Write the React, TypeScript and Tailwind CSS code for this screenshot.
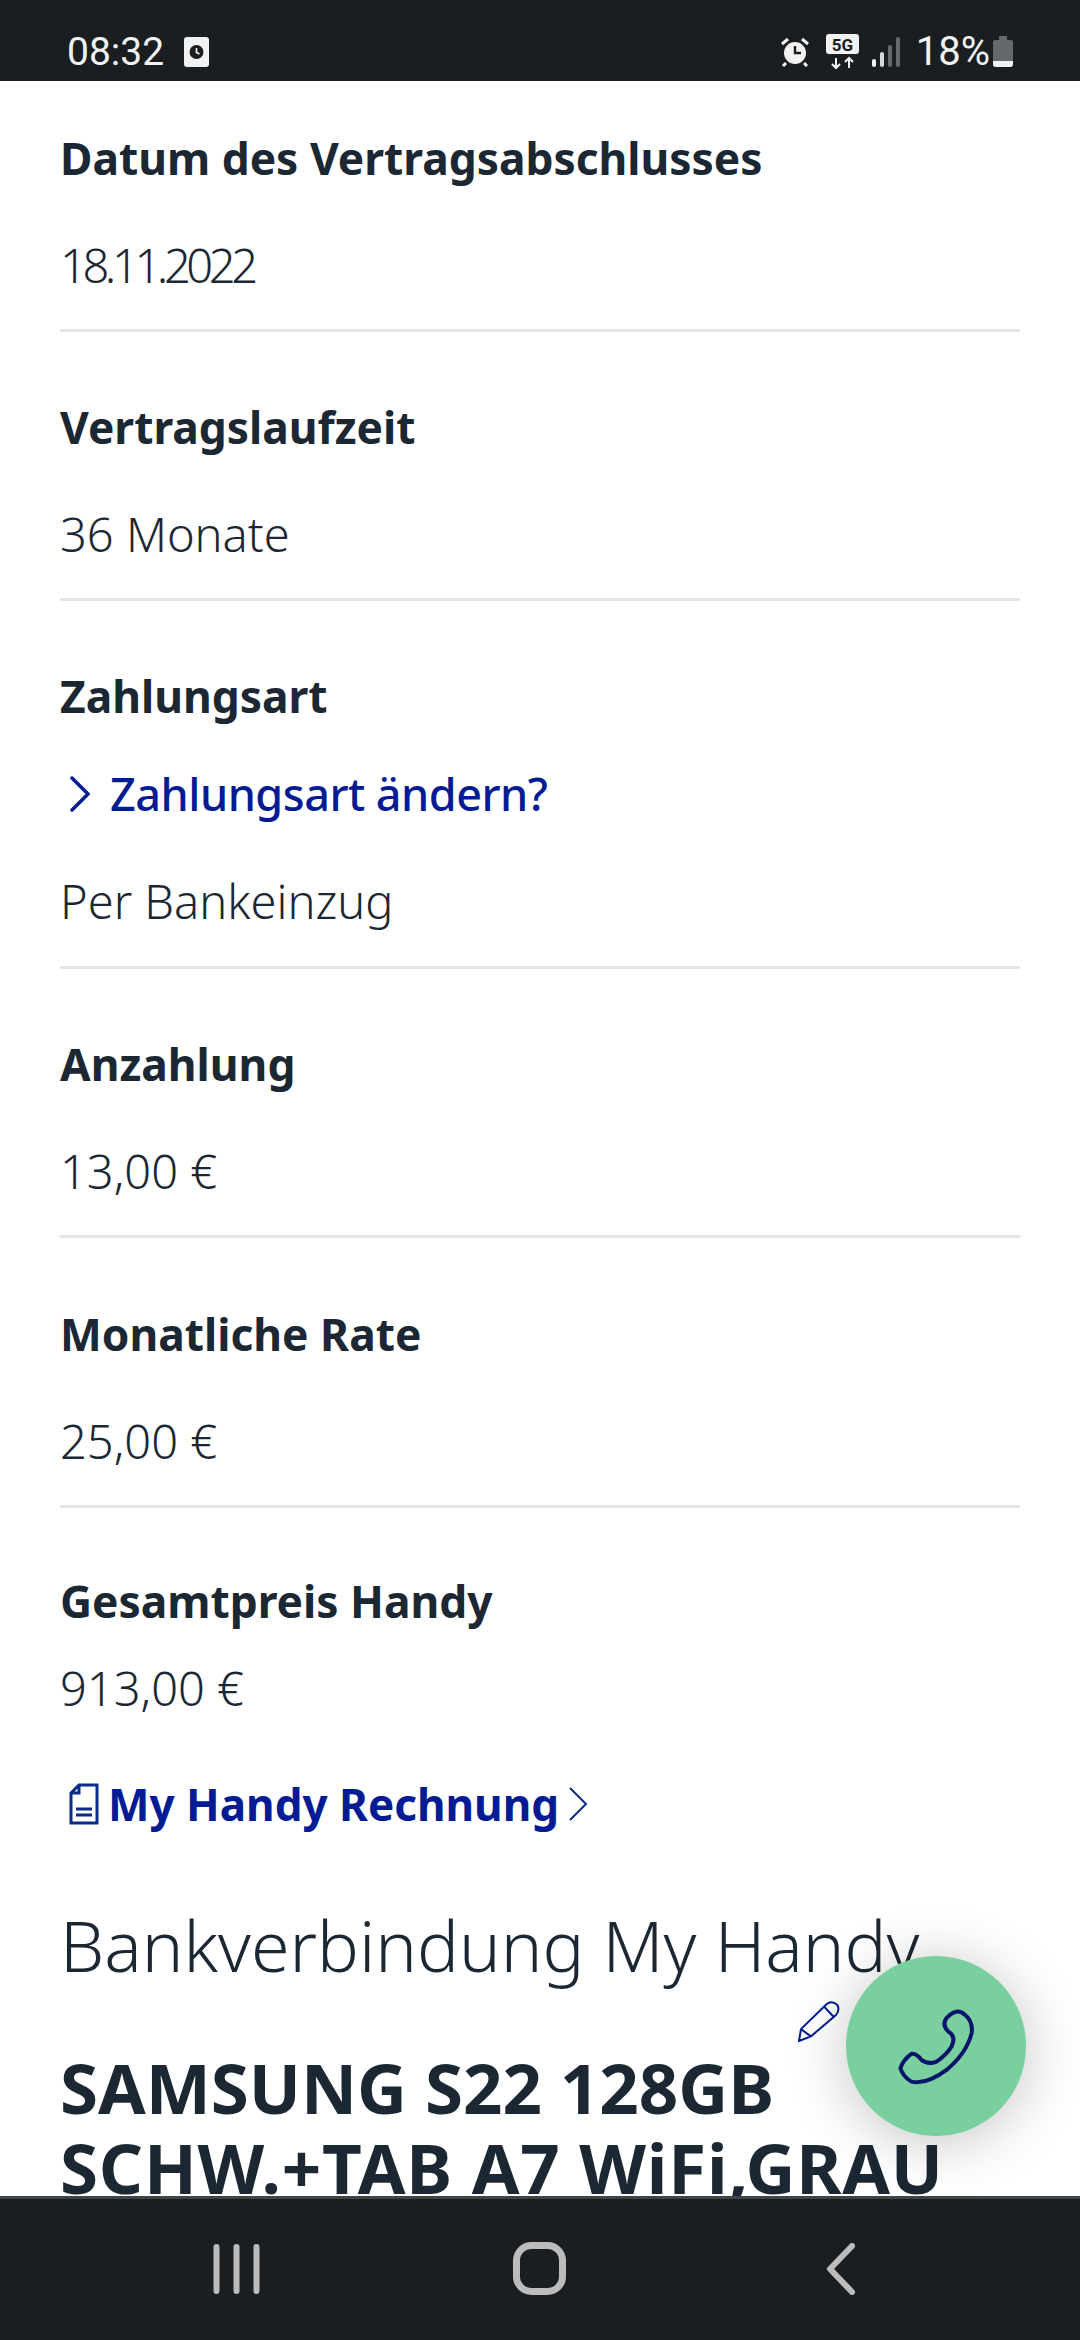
const sans = "font-['Noto_Sans',sans-serif]";

const Heading = ({ children }: { children: string }) => (
  <h3 className={`${sans} text-[44.3px] leading-[60px] font-bold text-[#1b2733]`}>{children}</h3>
);

const Value = ({ children, tight }: { children: string; tight?: boolean }) => (
  <p className={`${sans} text-[47px] leading-[60px] font-light text-[#1b2733] ${tight ? 'tracking-[-4.4px]' : ''}`}>{children}</p>
);

const Row = ({ title, value, pad = 'pt-[65px]', tight }: { title: string; value: string; pad?: string; tight?: boolean }) => (
  <section className={`${pad} pb-[34px] border-b-[3px] border-[#e4e5e5]`}>
    <Heading>{title}</Heading>
    <div className="mt-[47px]">
      <Value tight={tight}>{value}</Value>
    </div>
  </section>
);

const StatusBar = () => (
  <div className="h-[81px] shrink-0 bg-[#1a1e20] flex items-center justify-between pl-[67px] pr-[67px] pt-[22px]">
    <div className="flex items-center gap-[20px]">
      <span className="font-['Roboto',sans-serif] text-[39px] leading-[44px] text-[#f2f2f2]">08:32</span>
      <svg width="25" height="30" viewBox="0 0 25 30">
        <rect x="0" y="0" width="25" height="30" rx="3" fill="#f2f2f2" />
        <circle cx="12.5" cy="15" r="7" fill="#1a1e20" />
        <path d="M12.5 11v4.5l3 1.5" stroke="#f2f2f2" strokeWidth="1.6" fill="none" />
      </svg>
    </div>
    <div className="flex items-center">
      <svg width="30" height="30" viewBox="0 0 30 30">
        <circle cx="15" cy="16" r="11" fill="#f2f2f2" />
        <path d="M15 9v7h6" stroke="#1a1e20" strokeWidth="2.4" fill="none" />
        <path d="M2 7l6-5M28 7l-6-5M6 26l-3 3M24 26l3 3" stroke="#f2f2f2" strokeWidth="3" fill="none" />
      </svg>
      <svg className="ml-[16px]" width="33" height="36" viewBox="0 0 33 36">
        <rect x="0" y="0" width="33" height="20" rx="3" fill="#f2f2f2" />
        <text x="16.5" y="16.5" textAnchor="middle" fontFamily="Roboto, sans-serif" fontWeight="700" fontSize="17" fill="#1a1e20">5G</text>
        <path d="M10 24v10m-4-4l4 4 4-4M23 34V24m-4 4l4-4 4 4" stroke="#f2f2f2" strokeWidth="2" fill="none" />
      </svg>
      <svg className="ml-[13px]" width="28" height="30" viewBox="0 0 28 30">
        <rect x="0" y="22" width="4" height="8" rx="2" fill="#f2f2f2" />
        <rect x="8" y="15" width="4" height="15" rx="2" fill="#d8d8d8" />
        <rect x="16" y="8" width="4" height="22" rx="2" fill="#666a6c" />
        <rect x="24" y="0" width="4" height="30" rx="2" fill="#666a6c" />
      </svg>
      <span className="ml-[16px] font-['Roboto',sans-serif] text-[40px] leading-[44px] text-[#f2f2f2]">18%</span>
      <svg className="ml-[3px]" width="20" height="31" viewBox="0 0 20 31">
        <path d="M6 0h8v4h4a2 2 0 0 1 2 2v22a3 3 0 0 1-3 3H3a3 3 0 0 1-3-3V6a2 2 0 0 1 2-2h4z" fill="#66696b" />
        <path d="M0 25h20v3a3 3 0 0 1-3 3H3a3 3 0 0 1-3-3z" fill="#f2f2f2" />
      </svg>
    </div>
  </div>
);

const NavBar = () => (
  <div className="h-[144px] shrink-0 bg-[#1a1e20] border-t-[3px] border-[#3f4446] flex items-center pl-[213px] pb-[2px]">
    <svg width="47" height="50" viewBox="0 0 47 50">
      <path d="M3.5 3v44M23.5 3v44M43.5 3v44" stroke="#bcbcbc" strokeWidth="6" strokeLinecap="round" />
    </svg>
    <svg className="ml-[253px]" width="53" height="53" viewBox="0 0 53 53">
      <rect x="3.5" y="3.5" width="46" height="46" rx="15" stroke="#bcbcbc" strokeWidth="7" fill="none" />
    </svg>
    <svg className="ml-[260px]" width="30" height="52" viewBox="0 0 30 52">
      <path d="M26 3L4 26l22 23" stroke="#bcbcbc" strokeWidth="6" strokeLinecap="round" strokeLinejoin="round" fill="none" />
    </svg>
  </div>
);

export default function App() {
  return (
    <div className="relative w-[1080px] h-[2340px] flex flex-col overflow-hidden bg-white">
      <StatusBar />
      <main className="flex-1 min-h-0 overflow-hidden px-[60px]">
        <Row pad="pt-[47px]" tight title="Datum des Vertragsabschlusses" value="18.11.2022" />
        <Row title="Vertragslaufzeit" value="36 Monate" />

        <section className="pt-[65px] pb-[35px] border-b-[3px] border-[#e4e5e5]">
          <Heading>Zahlungsart</Heading>
          <a className={`${sans} mt-[35px] flex items-center text-[45px] leading-[66px] font-medium tracking-[-0.5px] text-[#001b94]`}>
            <svg className="ml-[10px] mr-[20px]" width="20" height="36" viewBox="0 0 20 36">
              <path d="M2 2l16 16L2 34" stroke="#001b94" strokeWidth="3.5" strokeLinecap="round" fill="none" />
            </svg>
            Zahlungsart ändern?
          </a>
          <div className="mt-[44px]">
            <Value>Per Bankeinzug</Value>
          </div>
        </section>

        <Row title="Anzahlung" value="13,00 €" />
        <Row pad="pt-[66px]" title="Monatliche Rate" value="25,00 €" />

        <section className="pt-[63px]">
          <Heading>Gesamtpreis Handy</Heading>
          <div className="mt-[27px]">
            <Value>913,00 €</Value>
          </div>
          <a className={`${sans} mt-[53px] flex items-center text-[44px] leading-[66px] font-bold text-[#001b94]`}>
            <svg className="ml-[9px] mr-[9px]" width="30" height="42" viewBox="0 0 30 42">
              <path d="M10 2h18v38H2V10zM10 2v8H2" stroke="#0a2a8c" strokeWidth="3" fill="none" />
              <path d="M7 26h16M7 32h16" stroke="#0a2a8c" strokeWidth="3" />
            </svg>
            My Handy Rechnung
            <svg className="ml-[9px]" width="20" height="34" viewBox="0 0 20 34">
              <path d="M2 1l16 16L2 33" stroke="#0a2a8c" strokeWidth="2" fill="none" />
            </svg>
          </a>
        </section>

        <h2 className={`${sans} mt-[66px] text-[70px] leading-[84px] font-light text-[#1b2733]`}>Bankverbindung My Handy</h2>
        <h1 className={`${sans} mt-[60px] text-[69px] leading-[80px] font-bold text-[#1b2733]`}>
          SAMSUNG S22 128GB
          <br />
          <span className="tracking-[0.8px]">SCHW.+TAB A7 WiFi,GRAU</span>
        </h1>
      </main>
      <NavBar />

      {/* pencil next to the heading */}
      <svg className="absolute left-[797px] top-[2000px]" width="43" height="43" viewBox="110 240 130 130">
        <path d="M122 328L200 252Q215 240 232 255Q240 270 228 285L152 350L116 364ZM122 328L152 350M192 260L222 292" stroke="#001b94" strokeWidth="6" strokeLinejoin="round" fill="none" />
      </svg>

      {/* call button */}
      <button className="absolute left-[846px] top-[1956px] w-[180px] h-[180px] rounded-full bg-[#7acf9e] shadow-[0_6px_60px_rgba(0,0,0,0.24)] flex items-center justify-center">
        <svg width="87" height="87" viewBox="400 250 260 260">
          <path d="M560 295Q590 262 615 285Q640 305 635 340Q620 400 560 450Q500 495 455 485Q430 470 422 445Q430 420 455 402Q470 400 485 420Q505 435 530 425Q560 405 575 380Q590 350 565 335Q545 315 560 295Z" stroke="#08156b" strokeWidth="12" strokeLinejoin="round" fill="none" />
        </svg>
      </button>
    </div>
  );
}
